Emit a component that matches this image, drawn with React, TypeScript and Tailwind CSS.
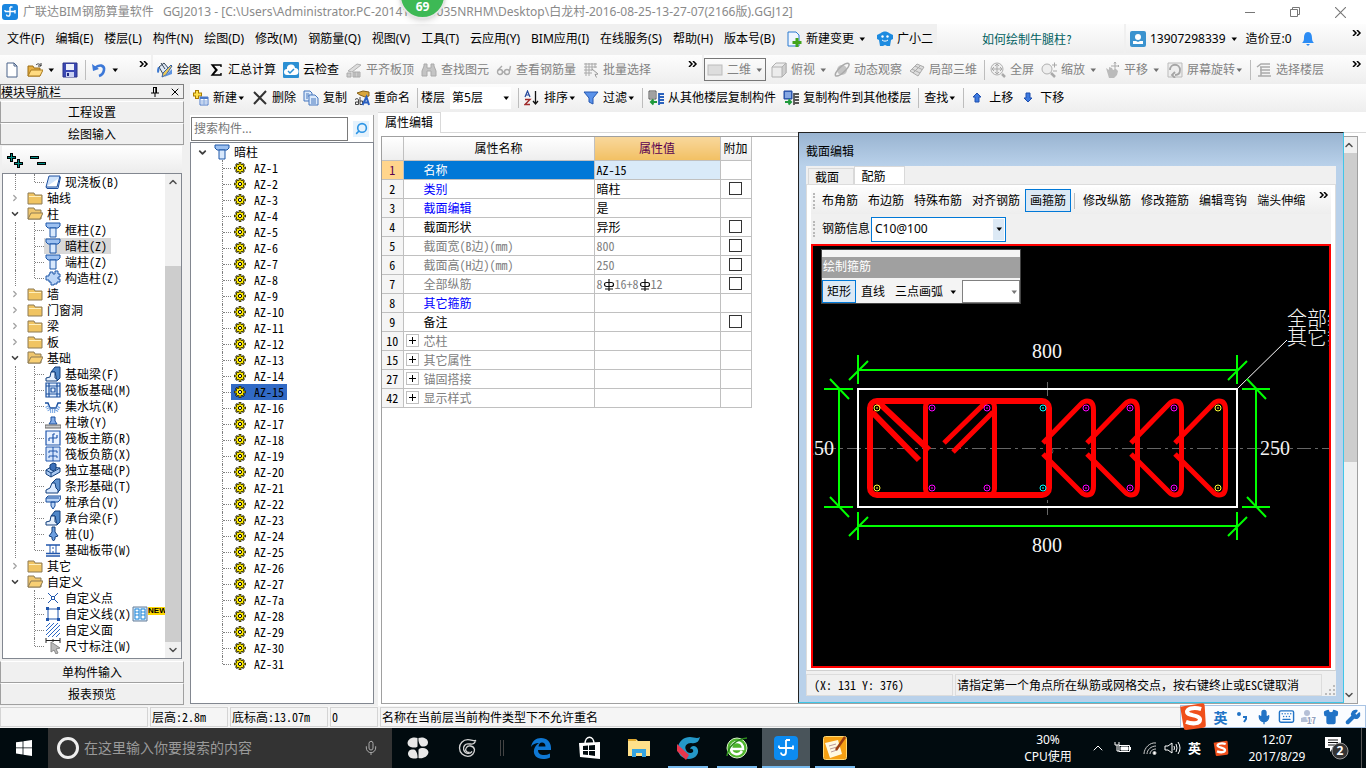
import type { ReactNode } from 'react';
import { ChevronDown, ChevronRight, ChevronUp, Mic, Search, Wrench, Shirt, Keyboard, X } from 'lucide-react';

const UI_FONT = "font-['Noto_Sans','Noto_Sans_CJK_SC',sans-serif]";
const SONG_FONT = "font-['Noto_Sans_Mono_CJK_SC','Noto_Sans_CJK_SC',monospace]";

type IconName = keyof typeof icons;

const icons = {
  app: (
    <>
      <rect width="16" height="16" rx="3" fill="#1a86e0" />
      <path d="M8 3v7c0 3-3.500 2.500-3.500.500M8 3h2.500M3 7.500h10M13 6v3.500M3 7.500V6" fill="none" stroke="#fff" strokeWidth="1.400" />
    </>
  ),
  file: <path d="M3 1h7l3 3v11H3zM10 1v3h3" fill="#fff" stroke="#4a6289" />,
  open: (
    <>
      <path d="M1 14V4h5l1 2h6v8z" fill="#e6b044" stroke="#9c6c12" />
      <path d="M1 14l3-6h12l-3 6z" fill="#ffdb80" stroke="#a97a1f" />
      <path d="M9 3c2-2 4-1 5 1m0-3v3h-3" fill="none" stroke="#333" />
    </>
  ),
  save: (
    <>
      <path d="M1 1h14v14H1z" fill="#3b49b4" stroke="#2b338a" />
      <path d="M4 2h8v6H4z" fill="#eef1fb" />
      <path d="M4 10h8v5H4z" fill="#c9d0f2" />
      <path d="M5 11h2v3H5z" fill="#222c80" />
    </>
  ),
  undo: (
    <>
      <path d="M1 2l1 7 6-2z" fill="#3c78d8" />
      <path d="M4 6c4-4 10-3 9 2-.5 3-2 5-5 6" fill="none" stroke="#3c78d8" strokeWidth="2.600" />
    </>
  ),
  paint: (
    <>
      <path d="M2 5l5-4 5 6-6 5z" fill="#dfe8f5" stroke="#345" />
      <path d="M4 1l4 6" stroke="#345" />
      <path d="M15 4l-6 9-4 2 1-4 8-8z" fill="#e9c85a" stroke="#3560a6" />
      <path d="M1 5c-1.500 3-1 6 0 6s2-3 1-6" fill="#3b78d0" />
      <path d="M7 15l8-8v5z" fill="#5d93e0" />
    </>
  ),
  sigma: <path d="M13 5V3H4l4 5-4 5h9v-2M4.500 3l4.500 5-4.500 5" fill="none" stroke="#000" strokeWidth="1.400" />,
  cloud: (
    <>
      <rect width="16" height="16" rx="1" fill="#2b8fd3" />
      <path d="M4 13a3 3 0 010-6 4 4 0 018-1 3.500 3.500 0 010 7z" fill="#fff" />
      <path d="M5 9l2 2 4-4" fill="none" stroke="#2b8fd3" strokeWidth="1.500" />
    </>
  ),
  align: (
    <>
      <path d="M2 9l9-7 4 1-9 7z" fill="#ddd" stroke="#b0b0b0" />
      <path d="M1 11h4v4H1zM7 10h7v5H7zM9 10v5M12 10v5" fill="#ccc" stroke="#aaa" />
    </>
  ),
  binoculars: <path d="M1 9l2-5V2h3v4h4V2h3v2l2 5v5h-5V9H6v5H1z" fill="#c4c4c4" stroke="#aaa" />,
  glasses: (
    <g fill="none" stroke="#aaa" strokeWidth="1.400">
      <circle cx="4" cy="10" r="2.500" />
      <circle cx="11" cy="10" r="2.500" />
      <path d="M6.500 10h2M2 8l4-4M13.500 9l1-5" />
    </g>
  ),
  gridSelect: (
    <>
      <path d="M1 2h13M1 5h13M1 8h8M1 11h8M3 1v13M6 1v13M9 1v8M12 1v5" stroke="#a8a8a8" />
      <path d="M9 7l6 5-3 .5 1.500 3" fill="#eee" stroke="#999" />
    </>
  ),
  flat: <rect x="1" y="3" width="14" height="10" fill="#ddd" stroke="#bbb" />,
  cube: (
    <>
      <path d="M1 5l4-4h10v10l-4 4H1z" fill="#ececec" stroke="#b0b0b0" />
      <path d="M11 5l4-4v10l-4 4z" fill="#cfcfcf" stroke="#b0b0b0" />
      <path d="M1 5h10" stroke="#b0b0b0" />
    </>
  ),
  orbit: (
    <>
      <circle cx="8" cy="8" r="5" fill="#c4c4c4" />
      <path d="M2 14C-2 12 12-2 15 2c1 3-9 13-13 12z" fill="none" stroke="#aaa" strokeWidth="1.500" />
    </>
  ),
  local3d: <path d="M1 9l7-7 7 3-6 9zM3 7l8 4M6 4l7 3.500M4 11l7-7" fill="#ddd" stroke="#aaa" />,
  fullscreen: (
    <>
      <circle cx="7" cy="7" r="6" fill="#eee" stroke="#b0b0b0" />
      <path d="M7 2v10M2 7h10M5 4l2-2 2 2M5 10l2 2 2-2M4 5L2 7l2 2M10 5l2 2-2 2" fill="none" stroke="#aaa" />
      <path d="M12 12l3 3" stroke="#aaa" strokeWidth="2.500" />
    </>
  ),
  zoom: (
    <>
      <circle cx="6" cy="7" r="5" fill="#eee" stroke="#b0b0b0" />
      <path d="M10 11l4 4" stroke="#aaa" strokeWidth="2.500" />
      <path d="M11 3h5M13.500 .5v5M12 9h4" stroke="#a8a8a8" />
    </>
  ),
  pan: (
    <>
      <path d="M2 6l3 2V5l3 1 1 2 3-1 2 2-1 4-3 3H5z" fill="#bbb" />
      <path d="M11 0v8M7 4h8M10 1.500L11 0l1 1.500M14 3l1 1-1 1" fill="none" stroke="#aaa" />
    </>
  ),
  rotate: (
    <>
      <path d="M1 1h14v14H1z" fill="#eee" stroke="#bbb" />
      <path d="M3 8c0-7 10-7 10 0 0 3-2 5-5 5M8 10l-3 3 3 3" fill="none" stroke="#a5a5a5" strokeWidth="1.800" />
    </>
  ),
  floor: <path d="M1 5l4-3h9M4 5h10M4 8h10M5 11h9M2 14h13M5 5v9" fill="none" stroke="#aaa" strokeWidth="1.500" />,
  add: (
    <>
      <path d="M4 0v9M0 4.500h9" stroke="#a97a00" strokeWidth="4" />
      <path d="M4 1v7M1 4.500h7" stroke="#ffe14d" strokeWidth="2" />
      <path d="M7 7h8v8H7z" fill="#fff" stroke="#4a78c8" />
      <path d="M7 7h8v2H7z" fill="#4a78c8" />
      <path d="M8 11h6M8 13h6M11 9v6" stroke="#86a8de" />
    </>
  ),
  remove: <path d="M2 2l12 12M14 1L2 14" stroke="#333" strokeWidth="2" />,
  copy: (
    <>
      <path d="M1 1h6l2 2v8H1z" fill="#dceafb" stroke="#4777bd" />
      <path d="M6 5h6l3 3v7H6z" fill="#dceafb" stroke="#4777bd" />
      <path d="M8 9h5M8 11h5M8 13h5M3 4h3M3 6h3M3 8h2" stroke="#4777bd" />
    </>
  ),
  rename: (
    <>
      <path d="M3 3l6-2 6 1v4l-4 1-5-2z" fill="#d9a63c" stroke="#86611a" />
      <path d="M1 9.500l2-1 1.500 1v5H1.500v-2.500h3M6 7v7.500h2.500V11H6" fill="none" stroke="#444" />
      <path d="M8.500 15l4-8 2.500 8M10 12.500h4" fill="none" stroke="#2a5fc0" strokeWidth="2" />
    </>
  ),
  sort: (
    <>
      <path d="M1 7l2.500-6L6 7M2 5h3" fill="none" stroke="#24489c" strokeWidth="1.200" />
      <path d="M1 9.500h5l-5 5h5" fill="none" stroke="#a02c2c" strokeWidth="1.400" />
      <path d="M11.500 1v13M9 11l2.500 3 2.500-3" fill="none" stroke="#111" strokeWidth="1.300" />
    </>
  ),
  filter: <path d="M1 2h14L10 8v6l-4-2V8z" fill="#5a92ea" stroke="#2457b0" />,
  copyFloor: (
    <>
      <path d="M1 1h7v8H1z" fill="#ddd" stroke="#555" />
      <path d="M2 3h5M2 5h5M2 7h5" stroke="#666" />
      <path d="M11 4h5M11 7h5M11 10h5M11 13h5M11 3v12" stroke="#2b62bd" strokeWidth="1.800" />
      <path d="M9 12H3M5.500 9.500L3 12l2.500 2.500" fill="none" stroke="#1f9a3c" strokeWidth="2" />
    </>
  ),
  copyFloorOut: (
    <>
      <path d="M1 1h8v8H1z" fill="#3d6fc6" stroke="#24489c" />
      <path d="M2 3h6M2 5h6M2 7h6" stroke="#cfe0ff" />
      <path d="M11 4h5M11 7h5M11 10h5M11 13h5M11 3v12" stroke="#555" strokeWidth="1.800" />
      <path d="M2 12h6M5.500 9.500L8 12l-2.500 2.500" fill="none" stroke="#1f9a3c" strokeWidth="2" />
    </>
  ),
  up: <path d="M8 3l4 4h-2v5H6V7H4z" fill="#3d7ae0" stroke="#1f4fae" />,
  down: <path d="M8 12L4 8h2V3h4v5h2z" fill="#3d7ae0" stroke="#1f4fae" />,
  change: (
    <>
      <path d="M2 1h8l3 3v11H2z" fill="#eef5ff" stroke="#2b7bd0" />
      <path d="M11 7v9M6.500 11.500h9" stroke="#43a51c" strokeWidth="3" />
    </>
  ),
  mascot: (
    <>
      <path d="M4 2c2-2 6-2 8 0l2 1 2 1v4l-2 1-1 6h-3l-2-1-2 1H3L2 9 0 8V4l2-1z" fill="#1d8be0" />
      <circle cx="5.500" cy="5.500" r="1.200" fill="#fff" />
      <circle cx="10.500" cy="5.500" r="1.200" fill="#fff" />
      <path d="M5 9c2 1.500 4 1.500 6 0" fill="none" stroke="#fff" />
    </>
  ),
  user: (
    <>
      <rect width="16" height="16" rx="2" fill="#3b93cf" />
      <circle cx="8" cy="6" r="3" fill="#fff" />
      <path d="M3 13v-3h3l2 1 2-1h3v3z" fill="#fff" />
    </>
  ),
  bell: <path d="M8 1c3 0 4 3 4 6s1 4 2 5H2c1-1 2-2 2-5s1-6 4-6M6 13h4l-2 2z" fill="#2c8cf4" />,
  folder: (
    <>
      <path d="M1 3h6l1 2h7v9H1z" fill="#f0c462" stroke="#8d7b55" />
      <path d="M2 6h12v1H2z" fill="#fff0bd" />
    </>
  ),
  folderOpen: (
    <>
      <path d="M1 13V2h6l1 2h6v9z" fill="#efc66e" stroke="#8d7b55" />
      <path d="M1 13l3-6h12l-3 6z" fill="#f8cf73" stroke="#8d7b55" />
    </>
  ),
  slab: <path d="M4 2h11l-3 11H1zM1 13l1 1.500h11L15.500 3" fill="#cfe3fb" stroke="#1d4f9e" />,
  column: (
    <>
      <path d="M1 1h14v3l-2 2H3L1 4z" fill="#9cc0f0" stroke="#1c57a8" />
      <path d="M5 6h6v9H5z" fill="#d8e8fc" stroke="#1c57a8" />
    </>
  ),
  structColumn: <path d="M5 2h3v2h2V1h3v3h2v3h-2v2h2v3h-3v2H9v1H6v-3H4v-2H1V6h3V4h1z" fill="#bcd6f7" stroke="#1c57a8" />,
  beam: (
    <>
      <path d="M6 6l4-5h5v11l-3 3-2-9z" fill="#4f87c8" stroke="#123f7c" />
      <path d="M1 15v-3l4-1 1-5h4v6l2 1v2z" fill="#e6f0fd" stroke="#123f7c" />
    </>
  ),
  raft: <path d="M1 1h14v14H1zM1 4h14M1 12h14M4 1v14M12 1v14M6 6h4v4H6z" fill="#e4f0ff" stroke="#194f9e" strokeWidth="1.200" />,
  pit: (
    <>
      <path d="M0 5h3l2 5h6l2-5h3" fill="none" stroke="#194f9e" strokeWidth="1.500" />
      <path d="M2 8l3 5h6l3-5" fill="none" stroke="#6d9fe0" strokeDasharray="1 1" strokeWidth="4" />
    </>
  ),
  pier: (
    <>
      <path d="M6 3h4v4l2 3H4l2-3z" fill="#86aee8" stroke="#194f9e" />
      <path d="M0 11h16v3H0z" fill="#ccc" stroke="#666" />
    </>
  ),
  mainBar: <path d="M1 1h14v14H1zM8 4v9M4 8h8M4 8v3M12 8V5M8 4h2" fill="#eaf2ff" stroke="#2056ac" strokeWidth="1.200" />,
  negBar: <path d="M1 1h14v14H1zM8 1v14M4 5h8M4 10h8M4 5v2M12 5v2M4 10v2M12 10v2" fill="#d4e4fb" stroke="#2056ac" />,
  footing: (
    <>
      <path d="M1 8l5-3 9 1v4l-9 5-5-3z" fill="#a9c9f2" stroke="#123f7c" />
      <path d="M1 8l5 3 9-5M6 11v4" fill="none" stroke="#123f7c" />
      <path d="M5 3l3-2 3 1v5L8 9 5 7z" fill="#3c70b8" stroke="#123f7c" />
    </>
  ),
  strip: (
    <>
      <path d="M7 5l4-4h4v11l-2 2z" fill="#5f92cf" stroke="#123f7c" />
      <path d="M1 15v-3l4-2 2-5h3l1 5 2 2v3z" fill="#dcebff" stroke="#123f7c" />
    </>
  ),
  cap: <path d="M1 4l2-2h13l-1 4-2 2H1zM1 4h13M6 8h4v4l-2 3-2-3z" fill="#b8d3f5" stroke="#194f9e" />,
  pile: <path d="M7 1h3v5l3 4-3 1v2l-1.500 2L7 13v-2l-3-1 3-4z" fill="#6d9fe0" stroke="#123f7c" />,
  band: (
    <>
      <path d="M1 3h14M1 14h14M1 11.500h14" stroke="#2056ac" strokeWidth="1.400" />
      <path d="M5 3v9M8 5v2M8 9v2M11 3v9" stroke="#2056ac" />
    </>
  ),
  point: (
    <>
      <path d="M3 3l10 10M13 3L3 13" stroke="#2056ac" />
      <path d="M6.500 6.500h3v3h-3z" fill="#fff" stroke="#2056ac" />
    </>
  ),
  polyline: (
    <>
      <path d="M3 3h10v10H3z" fill="#fff" stroke="#2056ac" />
      <path d="M1 1h3v3H1zM12 1h3v3h-3zM1 12h3v3H1zM12 12h3v3h-3z" fill="#2056ac" />
    </>
  ),
  hatch: <path d="M1 5l4-4M1 9l8-8M1 13l12-12M3 15L15 3M7 15l8-8M11 15l4-4" stroke="#2c68c4" />,
  dimension: (
    <>
      <path d="M1 0v5M15 0v5M1 2.500h14M8 1v3" stroke="#222" />
      <path d="M6 4v10l3-2 2 4 2-1-2-4 4-1z" fill="#bbb" stroke="#888" />
    </>
  ),
  gear: (
    <>
      <path d="M8 2v12M2 8h12M4 4l8 8M12 4l-8 8" stroke="#000" strokeWidth="2.600" />
      <circle cx="8" cy="8" r="4" fill="#ffeb00" stroke="#4a4400" />
      <path d="M8 2.500v11M2.500 8h11M4.500 4.500l7 7M11.500 4.500l-7 7" stroke="#ffeb00" />
      <circle cx="8" cy="8" r="1.600" fill="#fff" stroke="#000" />
    </>
  ),
};

function Icon({ name, className = 'size-4' }: { name: IconName; className?: string }) {
  return (
    <svg viewBox="0 0 16 16" className={`shrink-0 ${className}`} aria-hidden="true">
      {icons[name]}
    </svg>
  );
}

function Caret({ className = 'text-black' }: { className?: string }) {
  return (
    <svg viewBox="0 0 8 8" className={`size-2 shrink-0 ${className}`} aria-hidden="true">
      <path d="M1.500 2.500h5.500L4.250 6z" fill="currentColor" />
    </svg>
  );
}

function Divider() {
  return <span className="-mr-0.5 h-5 w-px shrink-0 bg-[#bdbdbd]" />;
}

function Tool({ icon, label, caret, tight, off }: {
  icon?: IconName;
  label?: string;
  caret?: boolean;
  tight?: boolean;
  off?: boolean;
}) {
  return (
    <button className={`flex shrink-0 items-center whitespace-nowrap ${off ? 'text-[#838383]' : 'text-black'}`}>
      {icon && <Icon name={icon} />}
      {label && <span className={icon ? 'ml-1' : ''}>{label}</span>}
      {caret && (
        <span className={tight ? '' : 'ml-1'}>
          <Caret className={off ? 'text-[#6f6f6f]' : 'text-black'} />
        </span>
      )}
    </button>
  );
}

function Overflow({ className = '' }: { className?: string }) {
  return (
    <button className={`mb-3 shrink-0 ${className}`} aria-label="更多">
      <svg viewBox="0 0 10 6" className="h-1.5 w-2.5">
        <path d="M1 0l3 3-3 3M5 0l3 3-3 3" fill="none" stroke="#000" strokeWidth="1.500" />
      </svg>
    </button>
  );
}

const stripBg = 'bg-linear-to-b from-[#fdfdfd] to-[#eeeeee]';

function TitleBar() {
  return (
    <header className="relative flex h-6 shrink-0 items-center bg-white pl-[2px] text-[#8a8a8a]">
      <Icon name="app" />
      <h1 className="ml-[5px] flex-1 truncate text-[12px] leading-4">
        <span className="mr-1.5">广联达BIM钢筋算量软件</span> GGJ2013 - [C:\Users\Administrator.PC-201411271035NRHM\Desktop\白龙村-2016-08-25-13-27-07(2166版).GGJ12]
      </h1>
      <div className="absolute -top-7 left-[399px] flex size-[47px] items-end justify-center rounded-full border-2 border-[#e4e4e4] bg-[#3db955] pb-0.5 text-[12px] leading-4 font-bold text-white shadow-md">
        69
      </div>
      <div className="flex h-full items-center gap-[35px] pr-5">
        <button aria-label="最小化" className="h-px w-[10px] bg-[#777]" />
        <button aria-label="还原">
          <svg viewBox="0 0 10 10" className="size-[10px]">
            <path d="M.5 2.500h7v7h-7zM2.500 2.500v-2h7v7h-2" fill="none" stroke="#777" />
          </svg>
        </button>
        <button aria-label="关闭">
          <svg viewBox="0 0 10 10" className="size-[11px]">
            <path d="M0 0l10 10M10 0L0 10" stroke="#777" />
          </svg>
        </button>
      </div>
    </header>
  );
}

const menus = [
  '文件(F)', '编辑(E)', '楼层(L)', '构件(N)', '绘图(D)', '修改(M)', '钢筋量(Q)', '视图(V)', '工具(T)',
  '云应用(Y)', 'BIM应用(I)', '在线服务(S)', '帮助(H)', '版本号(B)',
];

function MenuBar() {
  return (
    <nav className="flex h-[29px] shrink-0 bg-[#f0f0f0]">
      <div className="flex w-[937px] shrink-0 items-center gap-[11px] pl-[7px]">
        {menus.map((m) => (
          <button key={m} className="shrink-0 whitespace-nowrap">{m}</button>
        ))}
        <Tool icon="change" label="新建变更" caret />
        <Tool icon="mascot" label="广小二" />
      </div>
      <div className={`flex w-[187px] items-center pl-[45px] text-[#006060] ${stripBg}`}>
        <a href="#help" className={SONG_FONT}>如何绘制牛腿柱?</a>
      </div>
      <div className={`ml-0.5 flex flex-1 items-center gap-2 pl-1 ${stripBg}`}>
        <Tool icon="user" label="13907298339" caret />
        <span>造价豆:0</span>
        <Icon name="bell" />
        <Overflow className="mr-1 ml-auto" />
      </div>
    </nav>
  );
}

function MainToolbar() {
  return (
    <div className="flex h-[31px] shrink-0 border-t-2 border-[#f0f0f0] bg-[#f0f0f0]">
      <div className={`flex w-[151px] shrink-0 items-center gap-[7px] pl-1 ${stripBg}`}>
        <Tool icon="file" />
        <Tool icon="open" caret />
        <Tool icon="save" />
        <Divider />
        <Tool icon="undo" caret />
        <Overflow className="mr-0.5 ml-auto" />
      </div>
      <div className={`ml-0.5 flex w-[549px] shrink-0 items-center gap-[7px] pl-1 ${stripBg}`}>
        <Tool icon="paint" label="绘图" />
        <Tool icon="sigma" label="汇总计算" />
        <Tool icon="cloud" label="云检查" />
        <Tool icon="align" label="平齐板顶" off />
        <Tool icon="binoculars" label="查找图元" off />
        <Tool icon="glasses" label="查看钢筋量" off />
        <Tool icon="gridSelect" label="批量选择" off />
        <Overflow className="mr-1 ml-auto" />
      </div>
      <div className={`ml-0.5 flex flex-1 items-center gap-[7px] ${stripBg}`}>
        <div className="-mr-0.5 flex h-[23px] w-[62px] shrink-0 items-center justify-center border border-[#777]">
          <Tool icon="flat" label="二维" caret off />
        </div>
        <Tool icon="cube" label="俯视" caret off />
        <Tool icon="orbit" label="动态观察" off />
        <Tool icon="local3d" label="局部三维" off />
        <Divider />
        <Tool icon="fullscreen" label="全屏" off />
        <Tool icon="zoom" label="缩放" caret off />
        <Tool icon="pan" label="平移" caret off />
        <Tool icon="rotate" label="屏幕旋转" caret tight off />
        <Divider />
        <Tool icon="floor" label="选择楼层" off />
        <Overflow className="mr-1 ml-auto" />
      </div>
    </div>
  );
}

interface TreeGroup {
  label?: string;
  open?: boolean;
  items?: { icon: IconName; label: string; selected?: boolean; isNew?: boolean }[];
}

const moduleTree: TreeGroup[] = [
  { items: [{ icon: 'slab', label: '现浇板(B)' }] },
  { label: '轴线' },
  {
    label: '柱',
    open: true,
    items: [
      { icon: 'column', label: '框柱(Z)' },
      { icon: 'column', label: '暗柱(Z)', selected: true },
      { icon: 'column', label: '端柱(Z)' },
      { icon: 'structColumn', label: '构造柱(Z)' },
    ],
  },
  { label: '墙' },
  { label: '门窗洞' },
  { label: '梁' },
  { label: '板' },
  {
    label: '基础',
    open: true,
    items: [
      { icon: 'beam', label: '基础梁(F)' },
      { icon: 'raft', label: '筏板基础(M)' },
      { icon: 'pit', label: '集水坑(K)' },
      { icon: 'pier', label: '柱墩(Y)' },
      { icon: 'mainBar', label: '筏板主筋(R)' },
      { icon: 'negBar', label: '筏板负筋(X)' },
      { icon: 'footing', label: '独立基础(P)' },
      { icon: 'strip', label: '条形基础(T)' },
      { icon: 'cap', label: '桩承台(V)' },
      { icon: 'beam', label: '承台梁(F)' },
      { icon: 'pile', label: '桩(U)' },
      { icon: 'band', label: '基础板带(W)' },
    ],
  },
  { label: '其它' },
  {
    label: '自定义',
    open: true,
    items: [
      { icon: 'point', label: '自定义点' },
      { icon: 'polyline', label: '自定义线(X)', isNew: true },
      { icon: 'hatch', label: '自定义面' },
      { icon: 'dimension', label: '尺寸标注(W)' },
    ],
  },
];

function PanelButton({ children }: { children: ReactNode }) {
  return (
    <button className="h-[22px] w-full shrink-0 border border-[#a0a0a0] border-t-white bg-[#f0f0f0] text-center">
      {children}
    </button>
  );
}

function ScrollBar({ thumb }: { thumb: ReactNode }) {
  return (
    <div className="flex w-4 shrink-0 flex-col items-center bg-[#f0f0f0]">
      <ChevronUp className="my-0.5 size-3 shrink-0 text-[#505050]" strokeWidth={3} />
      {thumb}
      <ChevronDown className="mt-auto mb-0.5 size-3 shrink-0 text-[#505050]" strokeWidth={3} />
    </div>
  );
}

function ModuleNav() {
  return (
    <aside className={`flex w-[184px] shrink-0 flex-col pb-px ${SONG_FONT}`}>
      <div className="flex h-[15px] shrink-0 items-center border border-[#808080] bg-[#f0f0f0] pr-0.5">
        <h2 className="flex-1 text-[12px] leading-3">模块导航栏</h2>
        <svg viewBox="0 0 8 10" className="mr-2.5 h-2.5 w-2">
          <path d="M2 .5h4M2.500 0v6M5.500 0v6M4.800 0v6M0 6h8M4 6v4" stroke="#000" />
        </svg>
        <X className="size-3" strokeWidth={2} />
      </div>
      <div className="mt-0.5 flex shrink-0 flex-col">
        <PanelButton>工程设置</PanelButton>
        <PanelButton>绘图输入</PanelButton>
      </div>
      <div className="mx-0.5 mt-px flex h-[27px] shrink-0 items-center gap-[5px] bg-linear-to-b from-white to-[#ececec] pl-1">
        <button aria-label="全部展开">
          <svg viewBox="0 0 18 16" className="h-4 w-[18px]">
            <path d="M5.500 1v9M1 5.500h9M12.500 7v9M8 11.500h9" stroke="#000" strokeWidth="3" />
            <path d="M5.500 2v7M2 5.500h7M12.500 8v7M9 11.500h7" stroke="#008c84" />
          </svg>
        </button>
        <button aria-label="全部折叠">
          <svg viewBox="0 0 18 16" className="h-4 w-[18px]">
            <path d="M1 5.500h9M8 11.500h9" stroke="#000" strokeWidth="3" />
            <path d="M2 5.500h7M9 11.500h7" stroke="#008c84" />
          </svg>
        </button>
      </div>
      <div className="mx-0.5 flex min-h-0 flex-1 border border-[#828790] bg-white">
        <div className="min-w-0 flex-1 overflow-hidden">
          {moduleTree.map((g, gi) => (
            <div key={gi}>
              {g.label && (
                <div className="flex h-4 items-center">
                  <button className="flex w-6 justify-center" aria-label={g.label}>
                    {g.open ? (
                      <ChevronDown className="size-[10px] text-[#404040]" strokeWidth={4} />
                    ) : (
                      <ChevronRight className="size-[10px] text-[#a0a0a0]" strokeWidth={3} />
                    )}
                  </button>
                  <Icon name={g.open ? 'folderOpen' : 'folder'} />
                  <span className="ml-1">{g.label}</span>
                </div>
              )}
              {g.items?.map((it, i) => (
                <div key={it.label} className="flex h-4 items-center">
                  <span className={`h-4 w-[13px] shrink-0 ${gi < moduleTree.length - 1 ? 'border-r border-dotted border-[#808080]' : ''}`} />
                  <span className={`w-[19px] shrink-0 self-start border-r border-dotted border-[#808080] ${i === g.items!.length - 1 ? 'h-2' : 'h-4'}`} />
                  <span className="w-[9px] shrink-0 border-t border-dotted border-[#808080]" />
                  <button className={`flex h-4 shrink-0 items-center gap-1 px-px whitespace-nowrap ${it.selected ? 'bg-[#d9d9d9] pr-1' : ''}`}>
                    <Icon name={it.icon} />
                    {it.label}
                  </button>
                  {it.isNew && (
                    <>
                      <svg viewBox="0 0 16 16" className="size-4 shrink-0">
                        <path d="M1 1h14v14H1z" fill="#cfe6fb" stroke="#667f99" />
                        <path d="M3 3h4v10H3zM9 3h4v10H9zM3 6h4M9 6h4M3 9h4M9 9h4" fill="#fff" stroke="#1e86d8" />
                      </svg>
                      <span className="mb-1.5 bg-[#ffd800] font-['Liberation_Sans',sans-serif] text-[8px] leading-2 font-bold">NEW</span>
                    </>
                  )}
                </div>
              ))}
            </div>
          ))}
        </div>
        <ScrollBar thumb={<div className="mt-[76px] mb-0.5 w-full flex-1 bg-[#cdcdcd]" />} />
      </div>
      <div className="mt-0.5 flex shrink-0 flex-col">
        <PanelButton>单构件输入</PanelButton>
        <PanelButton>报表预览</PanelButton>
      </div>
    </aside>
  );
}

const members = [
  ...Array.from({ length: 27 }, (_, i) => `AZ-${i + 1}`),
  'AZ-7a', 'AZ-28', 'AZ-29', 'AZ-30', 'AZ-31',
];

function MemberList() {
  return (
    <section className="flex w-[184px] shrink-0 flex-col pt-[3px] pb-0.5">
      <div className="flex h-[27px] shrink-0 items-center border-r border-[#a0a0a0] bg-white pl-px">
        <input
          aria-label="搜索构件"
          placeholder="搜索构件..."
          className="h-6 w-[157px] border border-[#7a7a7a] bg-white px-0.5 text-[12px] placeholder:text-[#777] outline-none"
        />
        <button className="ml-[5px] flex size-4 items-center justify-center bg-[#e5f2fc]" aria-label="搜索">
          <Search className="size-[13px] -scale-x-100 text-[#2d95e5]" strokeWidth={3} />
        </button>
      </div>
      <div className={`min-h-0 flex-1 overflow-hidden border border-[#828790] bg-white pt-px ${SONG_FONT}`}>
        <div className="flex h-4 items-center">
          <button className="flex w-[23px] justify-center" aria-label="暗柱">
            <ChevronDown className="size-[11px] text-[#404040]" strokeWidth={4} />
          </button>
          <Icon name="column" />
          <span className="ml-1">暗柱</span>
        </div>
        {members.map((m, i) => (
          <div key={m} className="flex h-4 items-center">
            <span className={`w-8 shrink-0 self-start border-r border-dotted border-[#808080] ${i === members.length - 1 ? 'h-2' : 'h-4'}`} />
            <span className="w-2 shrink-0 border-t border-dotted border-[#808080]" />
            <button className={`flex h-4 items-center gap-1.5 px-px pr-[3px] ${m === 'AZ-15' ? 'bg-[#316ac5]' : ''}`}>
              <Icon name="gear" />
              {m}
            </button>
          </div>
        ))}
      </div>
    </section>
  );
}

function Rebar() {
  return (
    <svg viewBox="0 0 12 12" className="inline-block size-3 align-[-2px]">
      <path d="M6 0v12M3.500 3.500h5a2 2 0 010 4h-5a2 2 0 010-4M2 10h8" fill="none" stroke="#111" strokeWidth="1.200" />
    </svg>
  );
}

const properties: { no: number; name: string; value?: ReactNode; color?: string; check?: boolean; group?: boolean }[] = [
  { no: 1, name: '名称', value: 'AZ-15', color: 'text-white' },
  { no: 2, name: '类别', value: '暗柱', color: 'text-[#0000ff]', check: true },
  { no: 3, name: '截面编辑', value: '是', color: 'text-[#0000ff]' },
  { no: 4, name: '截面形状', value: '异形', check: true },
  { no: 5, name: '截面宽(B边)(mm)', value: '800', color: 'text-[#808080]', check: true },
  { no: 6, name: '截面高(H边)(mm)', value: '250', color: 'text-[#808080]', check: true },
  { no: 7, name: '全部纵筋', value: <>8<Rebar />16+8<Rebar />12</>, color: 'text-[#808080]', check: true },
  { no: 8, name: '其它箍筋', color: 'text-[#0000ff]' },
  { no: 9, name: '备注', check: true },
  { no: 10, name: '芯柱', color: 'text-[#808080]', group: true },
  { no: 15, name: '其它属性', color: 'text-[#808080]', group: true },
  { no: 27, name: '锚固搭接', color: 'text-[#808080]', group: true },
  { no: 42, name: '显示样式', color: 'text-[#808080]', group: true },
];

function PropertyTable() {
  return (
    <table className={`w-[369px] table-fixed border-collapse ${SONG_FONT}`}>
      <colgroup>
        <col className="w-[21px]" />
        <col className="w-[191px]" />
        <col className="w-[126px]" />
        <col className="w-[31px]" />
      </colgroup>
      <thead>
        <tr className="h-[23px] bg-linear-to-b from-white to-[#eeeeee]">
          <th className="border-r border-b border-[#c0c0c0]" />
          <th className="border-r border-b border-[#c0c0c0] font-normal">属性名称</th>
          <th className="border-r border-b border-[#c0c0c0] bg-linear-to-b from-[#f8d79b] to-[#f2c063] font-normal text-[#5a0050]">属性值</th>
          <th className="border-r border-b border-[#c0c0c0] font-normal">附加</th>
        </tr>
      </thead>
      <tbody>
        {properties.map((p) => {
          const active = p.no === 1;
          const muted = p.color === 'text-[#808080]';
          return (
            <tr key={p.no} className="h-[19px]">
              <td className={`border-r border-b border-[#c0c0c0] p-0 text-center leading-4 ${active ? 'bg-[#ffd58c] text-[#5a0050]' : 'bg-[#f5f5f5]'}`}>{p.no}</td>
              <td className={`border-r border-b border-[#c0c0c0] p-0 leading-4 ${p.color ?? ''} ${active ? 'bg-[#0078d7]' : ''}`}>
                <div className="flex items-center">
                  <span className="flex w-5 pl-0.5">
                    {p.group && (
                      <button aria-label={`展开${p.name}`} className="flex size-[13px] items-center justify-center border border-[#c0c0c0]">
                        <svg viewBox="0 0 7 7" className="size-[7px]">
                          <path d="M3.500 0v7M0 3.500h7" stroke="#000" />
                        </svg>
                      </button>
                    )}
                  </span>
                  {p.name}
                </div>
              </td>
              <td className={`border-r border-b border-[#c0c0c0] p-0 pl-0.5 leading-4 ${active ? 'bg-[#d9eaf9]' : ''} ${muted ? 'text-[#808080]' : ''}`}>{p.value}</td>
              <td className="border-r border-b border-[#c0c0c0] p-0">
                {p.check && (
                  <input type="checkbox" aria-label={`附加 ${p.name}`} className="mx-auto block size-[13px] appearance-none border border-[#333] bg-white" />
                )}
              </td>
            </tr>
          );
        })}
      </tbody>
    </table>
  );
}

const bars: [number, string][] = [
  [877, '#ffff33'], [932, '#ff00ff'], [987, '#ff00ff'], [1043, '#00ffff'],
  [1086, '#ff00ff'], [1130, '#ff00ff'], [1174, '#ff00ff'], [1218, '#ffff33'],
];

function SectionDrawing() {
  return (
    <svg className="block h-full w-full font-['Liberation_Serif','Noto_Sans_CJK_SC',serif] text-[20px]">
      <g transform="translate(-813 -246)" fill="none">
        <path d="M822 448.500H1340M1047.500 382V515" stroke="#666" strokeDasharray="14 4 3 4" />
        <circle cx="1050" cy="451" r="3" stroke="#555" />
        <rect x="858" y="389" width="379" height="118" stroke="#fff" strokeWidth="2" />
        <path d="M1237 389L1287 340" stroke="#fff" />
        <path
          stroke="#00ff00"
          strokeWidth="2"
          d="M858 370H1237M858 355V384M1237 355V384M849 380L868 361M1228 380L1247 361
             M858 526H1237M858 512V540M1237 512V540M849 536L868 517M1228 536L1247 517
             M839 389V507M824 389H853M824 507H853M830 379L849 399M830 497L849 517
             M1256 389V507M1242 389H1270M1242 507H1270M1247 379L1266 399M1247 497L1266 517"
        />
        <g stroke="#ff0000">
          <rect x="870" y="401" width="179" height="94" rx="7" strokeWidth="6" />
          <rect x="925.500" y="401" width="69" height="94" rx="6" strokeWidth="5" />
          <path strokeWidth="6" d="M878 402L929 450M872 412L919 460" />
          <path strokeWidth="5" d="M986 402L944 443M993 412L953 452" />
          {[0, 44, 88, 132].map((dx) => (
            <path
              key={dx}
              strokeWidth="5"
              transform={`translate(${dx} 0)`}
              d="M1043 443L1081 404Q1084 401 1087 401Q1093.500 401 1093.500 410V486Q1093.500 495 1087 495Q1084 495 1081 492L1043 454"
            />
          ))}
        </g>
        {bars.map(([x, color]) =>
          [408, 488].map((y) => (
            <g key={`${x}-${y}`} stroke={color}>
              <circle cx={x} cy={y} r="3" />
              <path d={`M${x - 1} ${y}h2`} />
            </g>
          )),
        )}
        <g fill="#f4f4f4">
          <text x="1032" y="358">800</text>
          <text x="1032" y="552">800</text>
          <text x="804" y="455">250</text>
          <text x="1260" y="455">250</text>
          <text x="1287" y="326" fontWeight="300">全部纵筋</text>
          <text x="1287" y="345" fontWeight="300">其它箍筋</text>
        </g>
      </g>
    </svg>
  );
}

function SectionTool({ label, active }: { label: string; active?: boolean }) {
  return (
    <button className={`h-[23px] shrink-0 border px-1 whitespace-nowrap ${active ? 'border-[#0078d7] bg-[#dce9f5]' : 'border-transparent'}`}>
      {label}
    </button>
  );
}

function Grip() {
  return <span className="mr-0.5 ml-0.5 h-4 w-0.5 shrink-0 border-l-2 border-dotted border-[#b8b8b8]" />;
}

function SectionWindow() {
  return (
    <section className="absolute top-5 right-[22px] bottom-[3px] flex w-[546px] flex-col border border-t-[#222] border-r-[#3fc6e8] border-b-[#3fc6e8] border-l-[#222] bg-[#b9d1ea] px-[7px] pb-1.5">
      <h2 className="-mx-[7px] flex h-[33px] shrink-0 items-center bg-linear-to-b from-[#99b4d1] to-[#b9d1ea] pt-1 pl-[7px]">截面编辑</h2>
      <div className={`flex min-h-0 flex-1 flex-col bg-[#f0f0f0] ${UI_FONT}`}>
        <div className={`flex h-[18px] shrink-0 items-end pl-0.5 text-[12px] leading-4 ${SONG_FONT}`}>
          <button className="h-4 w-[46px] border border-b-0 border-[#d9d9d9] pr-2">截面</button>
          <button className="h-[18px] w-[51px] border border-b-0 border-[#d9d9d9] bg-white pr-3">配筋</button>
        </div>
        <div className="flex min-h-0 flex-1 flex-col border border-b-[#d0d0d0] border-[#dcdcdc] bg-white px-1 pt-0.5 pb-0.5">
          <div className={`flex h-[27px] shrink-0 items-center ${stripBg}`}>
            <Grip />
            <SectionTool label="布角筋" />
            <SectionTool label="布边筋" />
            <SectionTool label="特殊布筋" />
            <SectionTool label="对齐钢筋" />
            <SectionTool label="画箍筋" active />
            <span className="mx-[3px] h-4 w-px bg-[#bdbdbd]" />
            <SectionTool label="修改纵筋" />
            <SectionTool label="修改箍筋" />
            <SectionTool label="编辑弯钩" />
            <SectionTool label="端头伸缩" />
            <Overflow className="mr-0.5 ml-auto" />
          </div>
          <div className="flex h-[30px] shrink-0 items-center bg-[#f0f0f0]">
            <Grip />
            <label htmlFor="rebar-info" className="ml-[5px]">钢筋信息</label>
            <div className="relative ml-px">
              <select id="rebar-info" className="block h-[25px] w-[135px] appearance-none border border-[#0078d7] bg-white pl-[3px] text-[12px]">
                <option>C10@100</option>
              </select>
              <span className="pointer-events-none absolute top-0.5 right-0.5 flex h-[21px] w-[11px] items-center justify-center bg-[#dce9f5]">
                <Caret />
              </span>
            </div>
          </div>
          <div className="relative min-h-0 flex-1 overflow-hidden border-2 border-[#ff0000] bg-black">
            <SectionDrawing />
            <div className="absolute top-[3px] left-2 w-[200px] border border-[#444] bg-[#f4f4f4] pt-[7px]">
              <h3 className="h-[21px] bg-[#a0a0a0] pl-px leading-5 text-white">绘制箍筋</h3>
              <div className="flex h-[25px] items-center pt-0.5">
                <button className="h-[23px] w-[34px] border border-[#0078d7] bg-[#dce9f5]">矩形</button>
                <button className="ml-[5px]">直线</button>
                <button className="ml-2.5 flex items-center gap-1.5">三点画弧<Caret /></button>
                <div className="relative ml-auto">
                  <select aria-label="箍筋参数" className="block h-[23px] w-[58px] appearance-none border border-[#808080] bg-white" />
                  <span className="pointer-events-none absolute top-2 right-0.5">
                    <Caret className="text-[#777]" />
                  </span>
                </div>
              </div>
            </div>
          </div>
        </div>
        <div className={`mt-[3px] flex h-[22px] shrink-0 items-center gap-0.5 ${SONG_FONT}`}>
          <span className="h-full w-[147px] border border-[#dcdcdc] pl-[7px] leading-5 whitespace-pre">(X: 131 Y: 376)</span>
          <span className="h-full flex-1 border border-[#dcdcdc] pl-px leading-5 whitespace-nowrap">请指定第一个角点所在纵筋或网格交点，按右键终止或ESC键取消</span>
          <svg viewBox="0 0 12 12" className="size-3 self-end">
            <path d="M9 1h2v2H9zM5 5h2v2H5zM9 5h2v2H9zM1 9h2v2H1zM5 9h2v2H5zM9 9h2v2H9z" fill="#bbb" />
          </svg>
        </div>
      </div>
    </section>
  );
}

function MemberToolbar() {
  return (
    <div className={`flex h-7 shrink-0 items-center gap-[7px] pl-[3px] ${stripBg}`}>
      <Tool icon="add" label="新建" caret tight />
      <Tool icon="remove" label="删除" />
      <Tool icon="copy" label="复制" />
      <Tool icon="rename" label="重命名" />
      <Divider />
      <label htmlFor="floor" className="-ml-0.5">楼层</label>
      <div className="relative -ml-0.5">
        <select id="floor" className="block h-[22px] w-[61px] appearance-none bg-white pl-0.5 text-[12px]">
          <option>第5层</option>
        </select>
        <span className="pointer-events-none absolute top-[7px] right-px">
          <Caret />
        </span>
      </div>
      <Divider />
      <Tool icon="sort" label="排序" caret tight />
      <Tool icon="filter" label="过滤" caret tight />
      <Divider />
      <Tool icon="copyFloor" label="从其他楼层复制构件" />
      <Tool icon="copyFloorOut" label="复制构件到其他楼层" />
      <Divider />
      <Tool label="查找" caret tight />
      <Divider />
      <Tool icon="up" label="上移" />
      <Tool icon="down" label="下移" />
    </div>
  );
}

function StatusBar() {
  const cell = 'h-5 shrink-0 border border-[#d4d4d4] pl-px leading-[18px]';
  return (
    <footer className={`relative flex h-[22px] shrink-0 items-center gap-0.5 bg-[#f5f5f5] ${SONG_FONT}`}>
      <span className={`${cell} w-[148px]`} />
      <span className={`${cell} w-[78px]`}>层高:2.8m</span>
      <span className={`${cell} w-[98px]`}>底标高:13.07m</span>
      <span className={`${cell} w-[48px]`}>0</span>
      <span className={`${cell} flex-1`}>名称在当前层当前构件类型下不允许重名</span>
      {/* input method bar floats over the right end */}
      <div className="absolute right-0 bottom-0 flex h-[23px] items-center gap-1.5 border border-[#a9c4e4] bg-[#fafcff] pr-1 pl-8 text-[#2173c6]">
        <SogouMark className="absolute -top-1 -left-0.5 size-[28px]" />
        <b className="w-[15px] text-center text-[14px]">英</b>
        <svg viewBox="0 0 16 16" className="size-4">
          <circle cx="5" cy="5" r="2" fill="currentColor" />
          <path d="M9 8h3v2l-2 3" fill="none" stroke="currentColor" strokeWidth="2" />
        </svg>
        <Mic className="size-4" fill="currentColor" />
        <Keyboard className="size-[17px]" strokeWidth={2} />
        <svg viewBox="0 0 16 16" className="size-4 text-[#b4bfd6]">
          <circle cx="6" cy="4" r="3" fill="currentColor" />
          <path d="M0 13V9l3-1h6l2 1v4z" fill="currentColor" />
          <text x="6" y="15" fontSize="9" fontWeight="bold" fill="#8fa0c0" stroke="#fff" strokeWidth="2" paintOrder="stroke">17</text>
        </svg>
        <Shirt className="size-4" fill="currentColor" />
        <Wrench className="size-4" fill="currentColor" />
      </div>
    </footer>
  );
}

function SogouMark({ className }: { className: string }) {
  return (
    <svg viewBox="0 0 24 24" className={className}>
      <path d="M1 4l19-3q2 0 2 2l1 17q0 2-2 2L6 24q-2 0-2-2z" fill="#f0501c" />
      <path d="M19 6C12 4 6 6 7 9s11 2 11 6-7 4-12 2" fill="none" stroke="#fff" strokeWidth="3.500" />
    </svg>
  );
}

function Swirl({ className }: { className: string }) {
  return (
    <svg viewBox="0 0 24 24" className={className} fill="none" stroke="currentColor" strokeWidth="1.600">
      <path d="M23 3c-3 1-5-1-10-1C7 2 3 7 3 12c0 6 5 10 10 10 5 0 8-4 8-8-1-5-8-6-10-2-2 3 1 6 4 5" />
      <path d="M22 4c-2 5-5 3-9 3-3 0-6 3-5 7 1 5 8 6 10 2" />
    </svg>
  );
}

function TaskButton({ label, running, active, children }: { label: string; running?: boolean; active?: boolean; children: ReactNode }) {
  return (
    <button
      aria-label={label}
      className={`relative flex h-10 w-12 shrink-0 items-center justify-center ${active ? 'bg-[#49545a]' : ''}`}
    >
      {children}
      {(running || active) && <span className={`absolute bottom-0 h-0.5 bg-[#76b9ed] ${active ? 'w-12' : 'w-10'}`} />}
    </button>
  );
}

function Taskbar() {
  return (
    <div className="flex h-10 shrink-0 items-center bg-[#010b0f] text-white">
      <TaskButton label="开始">
        <svg viewBox="0 0 16 16" className="size-4" fill="#fff">
          <path d="M0 2.300L6.600 1.400v6.100H0zM7.400 1.300L16 0v7.500H7.400zM0 8.300h6.600v6.200L0 13.600zM7.400 8.300H16V16l-8.600-1.300z" />
        </svg>
      </TaskButton>
      <div className="flex h-full w-[344px] shrink-0 items-center bg-[#333] pr-[13px] pl-[9px]">
        <span className="size-[22px] rounded-full border-3 border-[#eee]" />
        <input aria-label="搜索" placeholder="在这里输入你要搜索的内容" className="ml-[5px] min-w-0 flex-1 bg-transparent text-[14px] outline-none placeholder:text-[#9a9a9a]" />
        <Mic className="size-4 text-[#aaa]" strokeWidth={1.500} />
      </div>
      <div className="ml-0.5 flex items-center gap-px">
        <TaskButton label="风扇">
          <svg viewBox="0 0 22 22" className="size-[22px]" fill="#e8e8e8">
            <path d="M10.500 1v9C7 11 1 11 .5 6 1 1 7-.5 10.500 1zM11.500 1c4-1.500 9 0 9.500 4 0 4-3 5-6 4.500-2-.5-4-4.500-3.500-8.500zM11.500 12c3-1.500 9-2 10 3-.5 5-6 7-10 6zM10.500 21c-4 1.500-9 0-9.500-4 0-4 3-5 6-4.500 2 .5 4 4.500 3.500 8.500z" />
            <circle cx="11" cy="11" r="1.500" fill="#010b0f" />
          </svg>
        </TaskButton>
        <TaskButton label="广联达">
          <Swirl className="size-5 text-[#d5d5d5]" />
        </TaskButton>
        <span className="mr-3 ml-2 h-4 w-1 border-x border-[#444]" />
        <TaskButton label="Edge">
          <svg viewBox="0 0 22 22" className="size-[22px]" fill="#0f78d4">
            <path d="M1 10C2 4 6 1 11 1c6 0 10 4 10 10v2H8c0 4 3 5 6 5 2 0 4-.5 6-1.500v4C18 21.500 15 22 13 22 7 22 3 18 4 13c.5-3 2-5 5-7-4 0-6 1-8 4zM8.500 9.500h7C15.500 7 14 5.500 12 5.500S9 7 8.500 9.500z" />
          </svg>
        </TaskButton>
        <TaskButton label="应用商店">
          <svg viewBox="0 0 22 24" className="h-6 w-[22px]">
            <path d="M6 8c0-9 9-9 9 0" fill="none" stroke="#fff" strokeWidth="1.500" />
            <path d="M0 7l21-1v17l-20-2z" fill="#fff" />
            <path d="M4 10l5-.5v4.500H4zM10 9.500l6-.5v5h-6zM4 15h5v4l-5-.5zM10 15h6v5l-6-1z" fill="#010b0f" />
          </svg>
        </TaskButton>
        <TaskButton label="文件资源管理器">
          <svg viewBox="0 0 22 20" className="h-5 w-[22px]">
            <path d="M0 1h8l2 2h12v15H0z" fill="#ffe08a" />
            <path d="M0 1h8v2H0z" fill="#e0a92f" />
            <path d="M4 19v-8h14v8h-4v-4H8v4z" fill="#36a4e0" />
          </svg>
        </TaskButton>
        <TaskButton label="广联达服务" running>
          <svg viewBox="0 0 24 24" className="size-6">
            <path d="M24 1c-1 5-4 7-9 6-4 0-7 3-5 7 1 3 5 4 7 2 1-2-1-4-3-3 1-4 7-4 8 1 1 5-4 9-9 9C6 23 1 18 2 11 3 5 8 1 14 1c4 0 7 2 10 0z" fill="#2498c8" />
            <path d="M1 8l12 11-3 5L1 15z" fill="#e8364c" />
          </svg>
        </TaskButton>
        <TaskButton label="浏览器" running>
          <svg viewBox="0 0 24 24" className="size-6" fill="none">
            <circle cx="12" cy="12" r="10" fill="#4fb52c" stroke="#d8f3c8" />
            <path d="M6 13h12c0-9-11-9-12-1 0 7 8 8 11 3" stroke="#fff" strokeWidth="2.500" />
            <path d="M2 20C3 10 12 3 22 2" stroke="#2b8a1c" strokeWidth="1.500" />
          </svg>
        </TaskButton>
        <TaskButton label="GGJ2013" active>
          <svg viewBox="0 0 24 24" className="size-6">
            <rect width="24" height="24" rx="4" fill="#0c8bf0" />
            <path d="M12 4v12c0 4-5 4-5 .500M12 4h4M5 12h14M19 9.500v4M5 12V9.500" fill="none" stroke="#fff" strokeWidth="1.800" />
          </svg>
        </TaskButton>
        <TaskButton label="记事" running>
          <svg viewBox="0 0 24 24" className="size-6">
            <rect x=".5" y=".5" width="23" height="23" rx="2" fill="#f5a013" stroke="#ffd873" />
            <path d="M2 7l13-3 4 14-12 4z" fill="#fff8e0" />
            <path d="M6 10l7-2M7 13l7-2M8 16l6-2" stroke="#b99" />
            <path d="M22 1l-9 13" stroke="#9c3d10" strokeWidth="2.500" />
          </svg>
        </TaskButton>
      </div>
      <div className="ml-auto flex h-full items-center text-[12px] leading-[17px]">
        <div className="w-[60px] text-center">30%<br />CPU使用</div>
        <ChevronUp className="ml-3 size-4" strokeWidth={1.500} />
        <svg viewBox="0 0 18 14" className="ml-2 h-3.5 w-[18px]" fill="none" stroke="#fff">
          <path d="M5 4.500h10.500v6H5zM16.500 6v3M1 1v3h4V1M3 4v6h2" />
          <path d="M7 6h7v3H7z" fill="#fff" />
        </svg>
        <svg viewBox="0 0 16 16" className="ml-2.5 size-4" fill="none" stroke="#ccc">
          <path d="M2 14C2 8 8 2 14 3M5 14c0-4 4-8 9-8M8 14c0-3 3-5 6-5" />
          <circle cx="12.500" cy="13" r="1.500" fill="#fff" />
        </svg>
        <svg viewBox="0 0 18 16" className="ml-1.5 h-4 w-[18px]" fill="none" stroke="#fff">
          <path d="M1 6h3l4-3v10l-4-3H1zM10 6q1 2 0 4M12 4q2 4 0 8M14 2q4 6 0 12" />
        </svg>
        <b className="ml-1.5 text-[13px]">英</b>
        <SogouMark className="ml-3 size-4" />
        <div className="ml-2.5 w-[76px] text-center">12:07<br />2017/8/29</div>
        <button aria-label="通知" className="relative ml-2.5 h-6 w-6">
          <svg viewBox="0 0 24 24" className="size-6">
            <path d="M0 1h16v11H8l-3 4v-4H0z" fill="#fff" />
            <path d="M3 4h10M3 6.500h10M3 9h7" stroke="#111" />
            <circle cx="15" cy="15" r="8" fill="#333" stroke="#999" />
          </svg>
          <span className="absolute right-0 bottom-0 w-[18px] text-center text-[12px] leading-[18px] font-bold">2</span>
        </button>
        <span className="mr-1 ml-3 h-full w-px bg-[#555]" />
      </div>
    </div>
  );
}

export default function App() {
  return (
    <div className={`flex h-screen w-full flex-col overflow-hidden bg-[#f0f0f0] text-[12px] leading-4 text-black ${UI_FONT}`}>
      <TitleBar />
      <MenuBar />
      <MainToolbar />
      <main className="relative flex min-h-0 flex-1 gap-1.5">
        <ModuleNav />
        <div className="flex min-w-0 flex-1 flex-col">
          <MemberToolbar />
          <div className="flex min-h-0 flex-1 gap-1">
            <MemberList />
            <div className="flex min-w-0 flex-1 flex-col">
              <div className={`flex h-[21px] shrink-0 ${SONG_FONT}`}>
                <button className="w-[63px] shrink-0 border-t border-r border-[#d9d9d9] bg-white pb-0.5">属性编辑</button>
                <span className="flex-1 border-b border-[#d9d9d9] bg-white" />
              </div>
              <div className="flex min-h-0 flex-1 bg-white pt-[3px] pr-2 pb-0.5 pl-[3px]">
                <div className="flex flex-1 border border-[#a0a0a0]">
                  <div className="flex-1">
                    <PropertyTable />
                  </div>
                  <ScrollBar thumb={<div className="h-[309px] w-full bg-[#cdcdcd]" />} />
                </div>
              </div>
            </div>
          </div>
        </div>
        <div className="absolute top-7 right-0 bottom-0">
          <SectionWindow />
        </div>
      </main>
      <StatusBar />
      <Taskbar />
    </div>
  );
}
